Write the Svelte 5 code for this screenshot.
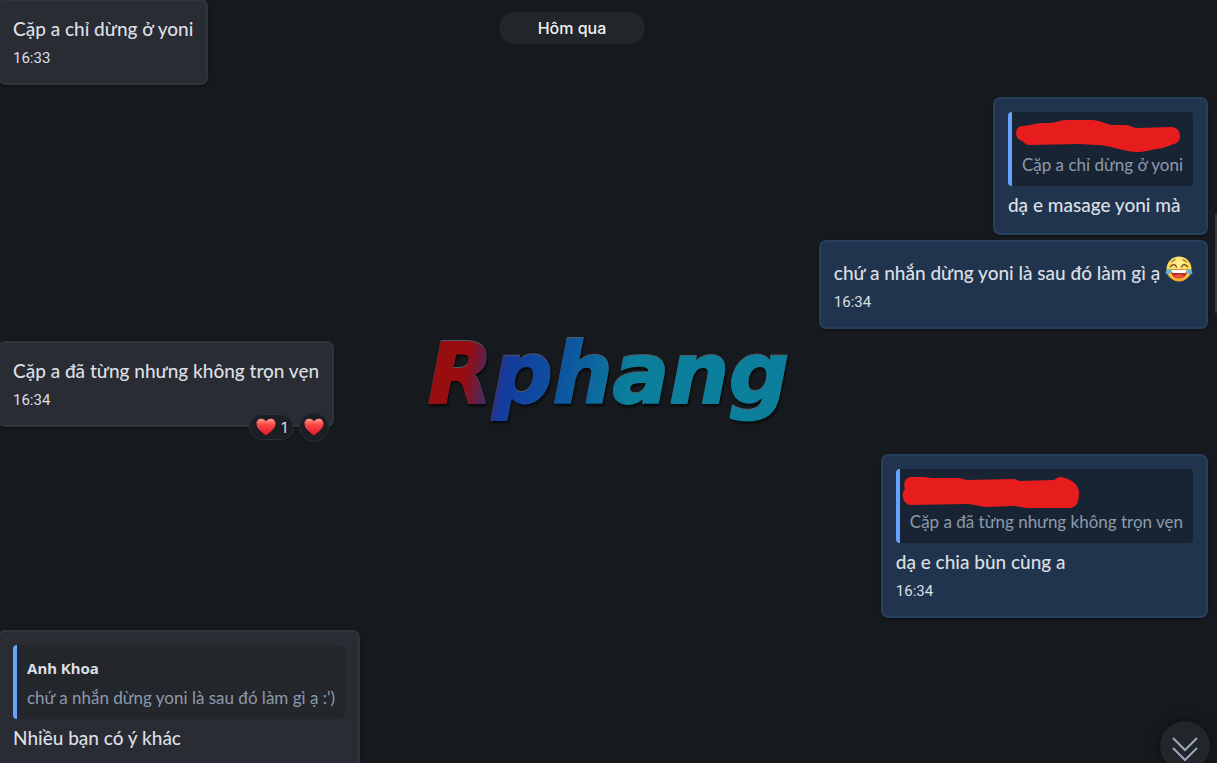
<script lang="ts">
	interface Quote {
		name?: string;
		text: string;
		scribble?: string;
	}
	interface Message {
		mine: boolean;
		text: string;
		time?: string;
		laugh?: boolean;
		quote?: Quote;
		hearts?: number;
		gap: 'none' | 'small' | 'normal' | 'large';
	}

	const messages: Message[] = [
		{ mine: false, text: 'Cặp a chỉ dừng ở yoni', time: '16:33', gap: 'none' },
		{
			mine: true,
			text: 'dạ e masage yoni mà',
			gap: 'normal',
			quote: {
				text: 'Cặp a chỉ dừng ở yoni',
				scribble:
					'M8 21Q8 15 14 14C22 14 27 11 34 11S43 11 48 10C52 9 54 8 59 8H84C92 8 97 12 104 13H118C122 13 125 16 129 16L163 15C169 15 172 19 172 24C172 28 170 31 166 32C159 34 155 37 148 37C142 38 137 40 129 40C122 40 117 38 111 37C102 35 97 33 88 33L71 32L21 33C18 33 16 30 14 29Q8 27 8 21Z'
			}
		},
		{ mine: true, text: 'chứ a nhắn dừng yoni là sau đó làm gì ạ', time: '16:34', laugh: true, gap: 'small' },
		{ mine: false, text: 'Cặp a đã từng nhưng không trọn vẹn', time: '16:34', hearts: 1, gap: 'normal' },
		{
			mine: true,
			text: 'dạ e chia bùn cùng a',
			time: '16:34',
			gap: 'large',
			quote: {
				text: 'Cặp a đã từng nhưng không trọn vẹn',
				scribble:
					'M9 20Q6 9 15 8H28L36 9H63L71 11L118 10L124 12L158 11C161 9 162 8 165 8C176 10 183 16 183 24C183 34 180 39 173 39H131L118 37L91 38C84 38 78 35 71 35L14 36C6 34 5 24 9 20Z'
			}
		},
		{
			mine: false,
			text: 'Nhiều bạn có ý khác',
			gap: 'normal',
			quote: { name: 'Anh Khoa', text: "chứ a nhắn dừng yoni là sau đó làm gì ạ :')" }
		}
	];
</script>

{#snippet heart()}
	<svg class="heart" viewBox="0 0 20 18" aria-hidden="true">
		<defs>
			<linearGradient id="heart-fill" x1="0" y1="0" x2="0" y2="1">
				<stop offset="0" stop-color="#ffa08c" />
				<stop offset="0.35" stop-color="#fb4a45" />
				<stop offset="1" stop-color="#e5132c" />
			</linearGradient>
		</defs>
		<path
			d="M10 17.5C7 15 .5 11 .5 5.8C.5 2.8 2.6.7 5.3.7C7.4.7 9.1 1.8 10 3.6C10.9 1.8 12.6.7 14.7.7C17.4.7 19.5 2.8 19.5 5.8C19.5 11 13 15 10 17.5Z"
			fill="url(#heart-fill)"
		/>
	</svg>
{/snippet}

<main class="chat">
	<div class="date-pill">Hôm qua</div>

	<div class="messages">
		{#each messages as msg}
			<article class="bubble gap-{msg.gap}" class:mine={msg.mine}>
				{#if msg.quote}
					<blockquote class="quote">
						<div class="quote-name">{msg.quote.name ?? ''}</div>
						<div class="quote-text">{msg.quote.text}</div>
						{#if msg.quote.scribble}
							<svg class="scribble" viewBox="0 0 184 74" aria-hidden="true">
								<path d={msg.quote.scribble} />
							</svg>
						{/if}
					</blockquote>
				{/if}
				<p class="text">
					{msg.text}
					{#if msg.laugh}
						<svg class="laugh" viewBox="0 0 28 28" role="img" aria-label="laughing">
							<defs>
								<radialGradient id="face" cx="0.5" cy="0.3" r="0.75">
									<stop offset="0" stop-color="#fff3a0" />
									<stop offset="0.6" stop-color="#fdd84a" />
									<stop offset="1" stop-color="#f39a1c" />
								</radialGradient>
							</defs>
							<circle cx="14" cy="14" r="12.5" fill="url(#face)" />
							<path d="M6.500 7Q8 5 10 4.800M18 4.800Q20 5 21.500 7" class="brow" />
							<path d="M5.500 11.500Q9.500 7.500 11.500 12M16.500 12Q18.500 7.500 22.500 11.500" class="eye" />
							<path d="M5.500 14.500H22.500C22.300 20.500 18.500 23.500 14 23.500S5.700 20.500 5.500 14.500Z" fill="#b5301f" />
							<path d="M6.200 15H21.800Q21.700 17 20.500 18H7.500Q6.300 17 6.200 15Z" fill="#fff" />
							<path d="M8.800 20.800Q14 17.800 19.200 20.800Q17 23.300 14 23.300T8.800 20.800Z" fill="#ee5044" />
							<path d="M5.800 13.500C5.800 18 4.500 19.500 2.600 19.500C.5 19.500 0 17 1.400 15.800Q3 14.500 5.800 13.500Z" class="tear" />
							<path d="M22.200 13.500C22.200 18 23.500 19.500 25.400 19.500C27.500 19.500 28 17 26.600 15.800Q25 14.500 22.200 13.500Z" class="tear" />
						</svg>
					{/if}
				</p>
				{#if msg.time}
					<time class="time">{msg.time}</time>
				{/if}
				{#if msg.hearts}
					<div class="reactions">
						<button class="reaction" aria-label="{msg.hearts} heart">
							{@render heart()}
							<span>{msg.hearts}</span>
						</button>
						<button class="reaction add" aria-label="React with heart">{@render heart()}</button>
					</div>
				{/if}
			</article>
		{/each}
	</div>

	<div class="watermark"><span>Rphang</span></div>
	<div class="scroll-thumb"></div>

	<button class="to-bottom" aria-label="Scroll to latest">
		<svg viewBox="0 0 26 24" aria-hidden="true">
			<path d="M1 1L13 13L25 1M1 11L13 23L25 11" />
		</svg>
	</button>
</main>

<style>
	:global(body) {
		background: #16191d;
	}
	.chat {
		position: relative;
		height: 100vh;
		overflow: hidden;
		background: #16191d;
		color: #dcdfe4;
		font-family: Lato, 'Noto Sans', sans-serif;
	}
	.messages {
		display: flex;
		flex-direction: column;
		align-items: flex-start;
		padding-right: 9px;
		margin: -1px 0 0 -2px;
	}
	.bubble {
		position: relative;
		box-sizing: border-box;
		padding: 13px;
		border: 2px solid #30343c;
		border-radius: 7px;
		background: #292c33;
		box-shadow: 0 1px 2px rgba(0, 0, 0, 0.4);
	}
	.bubble.mine {
		align-self: flex-end;
		background: #20354d;
		border-color: #263f5b;
	}
	.gap-small {
		margin-top: 5px;
	}
	.gap-normal {
		margin-top: 12px;
	}
	.gap-large {
		margin-top: 27px;
	}
	.quote {
		position: relative;
		margin: 0 0 4px;
		padding: 8px 10px 6px;
		border-left: 4px solid #66a3ff;
		border-radius: 4px;
		background: #23262b;
	}
	.mine .quote {
		background: #182434;
	}
	.quote-name,
	.quote-text {
		height: 30px;
		line-height: 30px;
		white-space: nowrap;
	}
	.quote-name {
		font-family: 'Noto Sans', sans-serif;
		font-size: 15px;
		font-weight: 700;
	}
	.quote-text {
		color: #8e9aab;
		font-size: 17px;
	}
	.scribble {
		position: absolute;
		top: 0;
		left: -4px;
		width: 184px;
		height: 74px;
		fill: #e71d1d;
	}
	.text {
		margin: 0;
		font-size: 19px;
		font-weight: 500;
		line-height: 30px;
		white-space: nowrap;
	}
	.laugh {
		width: 28px;
		height: 28px;
		vertical-align: -3px;
	}
	.brow,
	.eye {
		fill: none;
		stroke: #6e3b12;
		stroke-linecap: round;
	}
	.eye {
		stroke-width: 1.3;
	}
	.tear {
		fill: #4fb4ea;
	}
	.time {
		display: block;
		margin-top: 4px;
		padding-bottom: 2px;
		font-family: Roboto, sans-serif;
		font-size: 15px;
		line-height: 20px;
	}
	.reactions {
		position: absolute;
		right: 3px;
		bottom: -17px;
		display: flex;
		align-items: center;
		gap: 5px;
	}
	.reaction {
		display: flex;
		align-items: center;
		gap: 5px;
		height: 26px;
		padding: 0 6px;
		border: 1px solid #2b2f36;
		border-radius: 15px;
		background: #1b1e23;
		color: #dcdfe4;
		font-family: Inter, sans-serif;
		font-size: 15px;
	}
	.reaction.add {
		width: 30px;
		height: 30px;
		padding: 0 4px;
	}
	.heart {
		width: 20px;
		height: 18px;
	}
	.date-pill {
		position: absolute;
		top: 12px;
		left: 47%;
		transform: translateX(-50%);
		z-index: 1;
		min-width: 145px;
		border-radius: 14px;
		background: #22262a;
		color: #eef0f2;
		font-family: Inter, sans-serif;
		font-size: 16px;
		font-weight: 500;
		line-height: 32px;
		text-align: center;
	}
	.watermark {
		position: absolute;
		inset: 0;
		display: flex;
		align-items: center;
		justify-content: center;
		padding-bottom: 16px;
		pointer-events: none;
	}
	.watermark span {
		background: linear-gradient(100deg, #980d10 12%, #133b9e 23%, #0d55a0 38%, #0b7f9b 56%);
		background-clip: text;
		-webkit-background-clip: text;
		-webkit-text-stroke: 2px transparent;
		color: transparent;
		filter: drop-shadow(0 -1px 0 rgba(140, 160, 175, 0.5)) drop-shadow(1px 2px 1px rgba(0, 0, 0, 0.7));
		font-family: 'DejaVu Sans', sans-serif;
		font-size: 84px;
		font-style: italic;
		font-weight: 700;
	}
	.scroll-thumb {
		position: absolute;
		top: 28%;
		right: 0;
		width: 2px;
		height: 13%;
		background: #34373c;
	}
	.to-bottom {
		position: absolute;
		right: 7px;
		bottom: -8px;
		display: flex;
		justify-content: center;
		width: 50px;
		height: 50px;
		padding: 16px 0 0;
		border: 0;
		border-radius: 50%;
		background: #22252a;
		box-shadow: 0 0 12px rgba(0, 0, 0, 0.35);
	}
	.to-bottom svg {
		width: 26px;
		height: 24px;
		fill: none;
		stroke: #9aa8bd;
		stroke-width: 2;
	}
</style>
